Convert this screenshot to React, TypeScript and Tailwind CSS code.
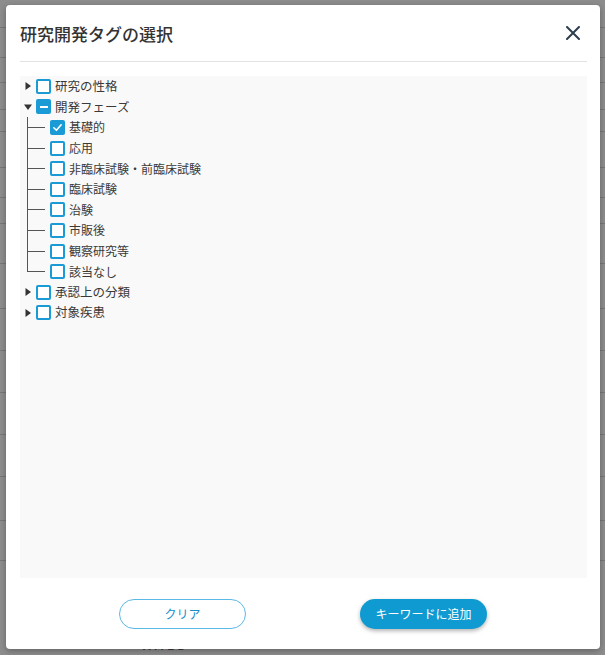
import React from "react";

const font = { fontFamily: '"Noto Sans CJK JP", "Noto Sans", sans-serif' };

function Box({ state }: { state: "none" | "checked" | "mixed" }) {
  if (state === "none")
    return <span className="box-border block w-[15px] h-[15px] rounded-[2px] border-2 border-[#1a9bd5] bg-white" />;
  return (
    <span className="box-border flex w-[15px] h-[15px] rounded-[2px] bg-[#1a9bd5] items-center justify-center">
      {state === "checked" ? (
        <svg width="11" height="11" viewBox="0 0 12 12">
          <path d="M2 6.3 L4.8 9 L10 3" stroke="white" strokeWidth="1.8" fill="none" strokeLinecap="round" strokeLinejoin="round" />
        </svg>
      ) : (
        <span className="block w-[8px] h-[2px] bg-white" />
      )}
    </span>
  );
}

function Caret({ open }: { open: boolean }) {
  return (
    <svg width="8" height="8" viewBox="0 0 8 8" className="block">
      {open ? <path d="M0 1.5 L8 1.5 L4 7 Z" fill="#333" /> : <path d="M1.5 0 L7 4 L1.5 8 Z" fill="#333" />}
    </svg>
  );
}

function ParentRow({ label, open, state }: { label: string; open: boolean; state: "none" | "mixed" }) {
  return (
    <div className="flex items-center h-[20.6px]">
      <div className="w-[16px] flex justify-center">
        <Caret open={open} />
      </div>
      <Box state={state} />
      <span className="ml-[4px] text-[12.5px] text-[#3a3a3a]">{label}</span>
    </div>
  );
}

function ChildRow({ label, last, checked }: { label: string; last?: boolean; checked?: boolean }) {
  return (
    <div className="flex items-center h-[20.6px] relative">
      <div className={`absolute left-[7px] top-0 w-px bg-[#555] ${last ? "h-[10.3px]" : "h-full"}`} />
      <div className="w-[30px] pl-[7px] flex items-center">
        <div className="h-px w-[18px] bg-[#555]" />
      </div>
      <Box state={checked ? "checked" : "none"} />
      <span className="ml-[4px] text-[12px] text-[#3a3a3a]">{label}</span>
    </div>
  );
}

export default function App() {
  const children = ["基礎的", "応用", "非臨床試験・前臨床試験", "臨床試験", "治験", "市販後", "観察研究等", "該当なし"];
  const bgRows = [28, 30, 25, 27, 22, 36, 30, 26, 40, 45, 42, 42, 42, 42, 44, 40];
  return (
    <div className="relative w-[605px] h-[655px] overflow-hidden bg-[#8d8d8d]" style={font}>
      <div className="flex flex-col">
        {bgRows.map((h, i) => (
          <div key={i} className="border-b border-[#777] w-full" style={{ height: h }} />
        ))}
      </div>
      <div className="absolute left-[143px] top-[638px] text-[12px] leading-[14px] tracking-[3px] text-[#3a3a3a] font-bold">AMED</div>

      <div className="absolute left-[6px] top-[5px] w-[594px] h-[644px] bg-white rounded-[4px] shadow-[0_2px_6px_rgba(0,0,0,0.3)] flex flex-col">
        <div className="h-[56px] flex items-center justify-between pl-[14px] pr-[20px]">
          <h1 className="text-[17px] text-[#333] font-medium leading-none">研究開発タグの選択</h1>
          <svg width="14" height="14" viewBox="0 0 14 14">
            <path d="M1 1 L13 13 M13 1 L1 13" stroke="#2c3e50" strokeWidth="2" strokeLinecap="round" />
          </svg>
        </div>
        <div className="ml-[14px] mr-[13px] h-px bg-[#e2e2e2]" />
        <div className="ml-[14px] mr-[13px] mt-[14px] h-[502px] bg-[#f9f9f9]">
          <ParentRow label="研究の性格" open={false} state="none" />
          <ParentRow label="開発フェーズ" open={true} state="mixed" />
          <div>
            {children.map((c, i) => (
              <ChildRow key={c} label={c} checked={i === 0} last={i === children.length - 1} />
            ))}
          </div>
          <ParentRow label="承認上の分類" open={false} state="none" />
          <ParentRow label="対象疾患" open={false} state="none" />
        </div>
        <div className="mt-[21px] flex justify-center gap-[114px]">
          <button className="w-[127px] h-[30px] rounded-full border border-[#5ab9e6] bg-white text-[12px] text-[#1a8ec8]">
            クリア
          </button>
          <button className="w-[127px] h-[30px] rounded-full bg-[#0f9ad1] text-[12px] text-white shadow-[0_2px_4px_rgba(0,0,0,0.3)]">
            キーワードに追加
          </button>
        </div>
      </div>
    </div>
  );
}
